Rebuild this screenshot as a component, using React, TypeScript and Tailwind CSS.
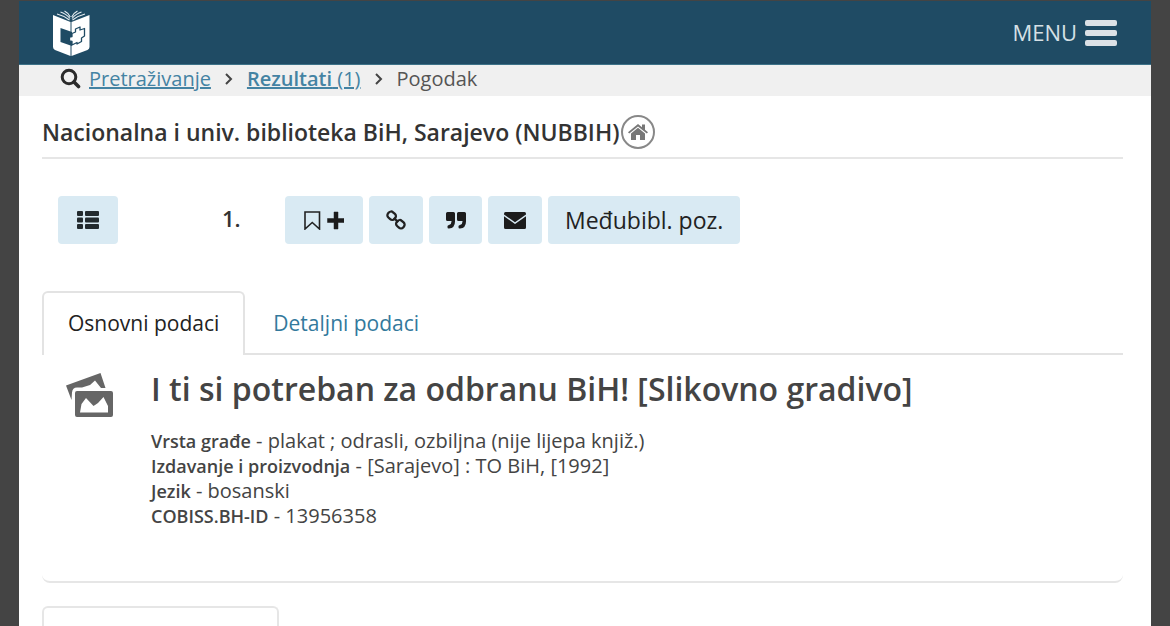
import type { ReactNode } from "react";

type Detail = {
  label: string;
  value: string;
};

const details: Detail[] = [
  { label: "Vrsta građe", value: "plakat ; odrasli, ozbiljna (nije lijepa knjiž.)" },
  { label: "Izdavanje i proizvodnja", value: "[Sarajevo] : TO BiH, [1992]" },
  { label: "Jezik", value: "bosanski" },
  { label: "COBISS.BH-ID", value: "13956358" },
];

const Logo = () => (
  <svg width="38" height="46" viewBox="0 0 38 46" fill="none">
    {/* Loose pages */}
    <path
      d="M17.500 10C13 6.500 9 5 5 4M18 8.500C15 5 12 3 8.500 2M18.300 7C17 4 14.500 2 12.500 1M20.500 10C25 6.500 29 5 33 4M20 8.500C23 5 26 3 29.500 2M19.700 7C21 4 23.500 2 25.500 1"
      stroke="#e6eef2"
      strokeWidth="1.100"
    />
    {/* Cover */}
    <path d="M1 5L18.500 12V46L3 40Q1 39 1 37Z" fill="#fff" />
    <path d="M37.500 5L19.500 12V46L35.500 40Q37.500 39 37.500 37Z" fill="#fff" />
    <path d="M8.500 18L20 22V36L8.500 32Z" fill="#1f4b64" />
    {/* Puzzle piece */}
    <path
      d="M20 23.500L23.500 22V19L28 17V20L32.500 18.500V26L29.500 28V31.500L25 34V32.500L20 35V31.500L17.500 31V27L20 26.500Z"
      fill="#fff"
      stroke="#1f4b64"
      strokeWidth="1.300"
      strokeLinejoin="round"
    />
  </svg>
);

const SearchIcon = () => (
  <svg width="21" height="21" viewBox="0 0 21 21" fill="none" stroke="#2b2b2b">
    <circle cx="9" cy="9" r="6.800" strokeWidth="3" />
    <path d="M14 14L18.500 18.500" strokeWidth="3.600" strokeLinecap="round" />
  </svg>
);

const Chevron = () => (
  <svg width="8" height="12" viewBox="0 0 8 12" fill="none" stroke="#444" strokeWidth="2">
    <path d="M1 1L6 6L1 11" />
  </svg>
);

const HomeIcon = () => (
  <svg width="20" height="18" viewBox="0 0 20 18" fill="#777">
    <path d="M10 1L0 9.2L1.2 10.6L10 3.4L18.800 10.600L20 9.200L17 6.700V1.400H14V4.300Z" />
    <path d="M10 4.800L3 10.500V17H8V12H12V17H17V10.500Z" />
  </svg>
);

const ListIcon = () => (
  <svg width="22" height="18" viewBox="0 0 22 18" fill="#222a2e">
    <rect width="6" height="5" rx="1" />
    <rect x="8" width="14" height="5" rx="1" />
    <rect y="6.500" width="6" height="5" rx="1" />
    <rect x="8" y="6.500" width="14" height="5" rx="1" />
    <rect y="13" width="6" height="5" rx="1" />
    <rect x="8" y="13" width="14" height="5" rx="1" />
  </svg>
);

const BookmarkPlusIcon = () => (
  <svg width="40" height="20" viewBox="0 0 40 20">
    <path d="M1 2H15.500V19L8.250 12.500L1 19Z" fill="none" stroke="#222" strokeWidth="1.600" />
    <path
      d="M30 2H34V8.500H40V12.500H34V19H30V12.500H23.500V8.500H30Z"
      fill="#1c1c1c"
      stroke="#1c1c1c"
      strokeLinejoin="round"
      strokeWidth="0.500"
    />
  </svg>
);

const LinkIcon = () => (
  <svg width="20" height="20" viewBox="0 0 20 20" fill="none" stroke="#222" strokeWidth="2.300">
    <rect x="1.400" y="2.200" width="8.500" height="7" rx="3" transform="rotate(42 5.600 5.700)" />
    <rect x="10.100" y="10.700" width="8.500" height="7" rx="3" transform="rotate(42 14.300 14.200)" />
    <path d="M7.800 7.800L12.200 12.200" />
  </svg>
);

const QuoteIcon = () => (
  <svg width="20" height="17" viewBox="0 0 20 17" fill="#1c1c1c">
    <path d="M1.500 0H7.500Q9 0 9 1.500V9.500Q9 16 3 16.500Q1.500 16.700 1.500 15.200V14.200Q1.500 13.200 3 13Q5.500 12.400 5.500 9.500V9H1.500Q0 9 0 7.500V1.500Q0 0 1.500 0Z" />
    <path d="M12.500 0H18.500Q20 0 20 1.500V9.500Q20 16 14 16.500Q12.500 16.700 12.500 15.200V14.200Q12.500 13.200 14 13Q16.500 12.400 16.500 9.500V9H12.500Q11 9 11 7.500V1.500Q11 0 12.500 0Z" />
  </svg>
);

const MailIcon = () => (
  <svg width="22" height="17" viewBox="0 0 22 17" fill="#1c1c1c">
    <path d="M1.500 0H20.500Q22 0 22 1.500V2.500L11 10.300L0 2.500V1.500Q0 0 1.500 0Z" />
    <path d="M0 4.300L11 12L22 4.300V15.500Q22 17 20.500 17H1.500Q0 17 0 15.500Z" />
  </svg>
);

const ImagesIcon = () => (
  <svg width="47" height="45" viewBox="0 0 47 45" fill="#666">
    <path d="M0 12.500L34.500 0L39.500 15H35L29 7.500L24 12L16 14.500H11Q6.500 14.500 6 19.500L5.500 27Z" />
    <path
      fillRule="evenodd"
      d="M11 18H45Q47 18 47 20V42Q47 44 45 44H11Q9 44 9 42V20Q9 18 11 18ZM14 39.500H42V33L37.500 24L32 30L27.500 33L20 25L15.500 31Z"
    />
  </svg>
);

const ToolButton = ({
  label,
  className,
  children,
}: {
  label: string;
  className: string;
  children: ReactNode;
}) => (
  <button
    type="button"
    aria-label={label}
    className={`flex h-12 items-center justify-center rounded bg-[#d9eaf3] text-[#222] ${className}`}
  >
    {children}
  </button>
);

const App = () => {
  return (
    <div className="min-h-screen bg-[#444] px-[19px] pt-px font-['Open_Sans',sans-serif] text-[#333]">
      <div className="min-h-[625px] bg-white">
        {/* Top bar */}
        <header className="flex h-16 items-center justify-between border-b border-[#3d7288] bg-[#1f4b64] pr-[34px] pl-[33px]">
          <a href="#" aria-label="COBISS">
            <Logo />
          </a>
          <button type="button" className="flex items-center gap-2 text-[22px] text-[#d5e0e6]">
            MENU
            <span className="flex flex-col gap-1">
              <span className="h-[6px] w-8 rounded-xs bg-[#dce1e6]" />
              <span className="h-[6px] w-8 rounded-xs bg-[#dce1e6]" />
              <span className="h-[6px] w-8 rounded-xs bg-[#dce1e6]" />
            </span>
          </button>
        </header>

        {/* Breadcrumbs */}
        <nav className="flex h-[31px] items-center bg-[#f0f0f0] px-[41px] pb-1 text-[20px] text-[#555]">
          <SearchIcon />
          <a href="#" className="ml-2 text-[#4483a3] underline">
            Pretraživanje
          </a>
          <span className="mx-[14px]">
            <Chevron />
          </span>
          <a href="#" className="text-[#4483a3] underline">
            <span className="font-semibold">Rezultati</span> (1)
          </a>
          <span className="mx-[14px]">
            <Chevron />
          </span>
          <span>Pogodak</span>
        </nav>

        <main className="pr-7 pl-[23px]">
          <div className="flex items-center gap-[2px] border-b-2 border-[#e6e6e6] pt-[19px] pb-2">
            <h2 className="text-[23px] leading-8 font-semibold">
              Nacionalna i univ. biblioteka BiH, Sarajevo (NUBBIH)
            </h2>
            <a
              href="#"
              aria-label="Početna"
              className="flex size-[34px] items-center justify-center rounded-full border-2 border-[#888]"
            >
              <HomeIcon />
            </a>
          </div>

          {/* Toolbar */}
          <div className="mt-[37px] flex items-center pl-4">
            <ToolButton label="Lista" className="w-[60px]">
              <ListIcon />
            </ToolButton>
            <span className="w-[167px] pb-1 pl-[104px] text-[22px] font-semibold">1.</span>
            <div className="flex gap-[6px]">
              <ToolButton label="Dodaj" className="w-[78px]">
                <BookmarkPlusIcon />
              </ToolButton>
              <ToolButton label="Link" className="w-[54px]">
                <LinkIcon />
              </ToolButton>
              <ToolButton label="Citiraj" className="w-[53px]">
                <QuoteIcon />
              </ToolButton>
              <ToolButton label="E-pošta" className="w-[54px]">
                <MailIcon />
              </ToolButton>
              <ToolButton label="Međubibl. poz." className="px-[17px] text-[23px]">
                Međubibl. poz.
              </ToolButton>
            </div>
          </div>

          {/* Tabs */}
          <div className="mt-[47px] flex border-b-2 border-[#e3e3e3] text-[21px]">
            <button
              type="button"
              className="-mb-[2px] h-16 rounded-t-md border-2 border-b-0 border-[#e3e3e3] bg-white px-6 text-[#222]"
            >
              Osnovni podaci
            </button>
            <button type="button" className="px-7 pt-1 text-[#33799c]">
              Detaljni podaci
            </button>
          </div>

          {/* Record */}
          <section className="flex h-[228px] gap-[38px] rounded-b-lg border-b-2 border-[#e6e6e6] pt-[14px] pl-6">
            <div className="pt-1">
              <ImagesIcon />
            </div>
            <div>
              <h1 className="text-[32px] leading-10 font-semibold text-[#444]">
                I ti si potreban za odbranu BiH! [Slikovno gradivo]
              </h1>
              <div className="mt-[19px] text-[20px] leading-[25px] text-[#444]">
                {details.map((item) => (
                  <p key={item.label}>
                    <span className="text-lg leading-6 font-semibold">{item.label}</span> - {item.value}
                  </p>
                ))}
              </div>
            </div>
          </section>

          <div className="mt-[23px] h-5 w-[237px] rounded-t-md border-2 border-b-0 border-[#e6e6e6]" />
        </main>
      </div>
    </div>
  );
};

export default App;
